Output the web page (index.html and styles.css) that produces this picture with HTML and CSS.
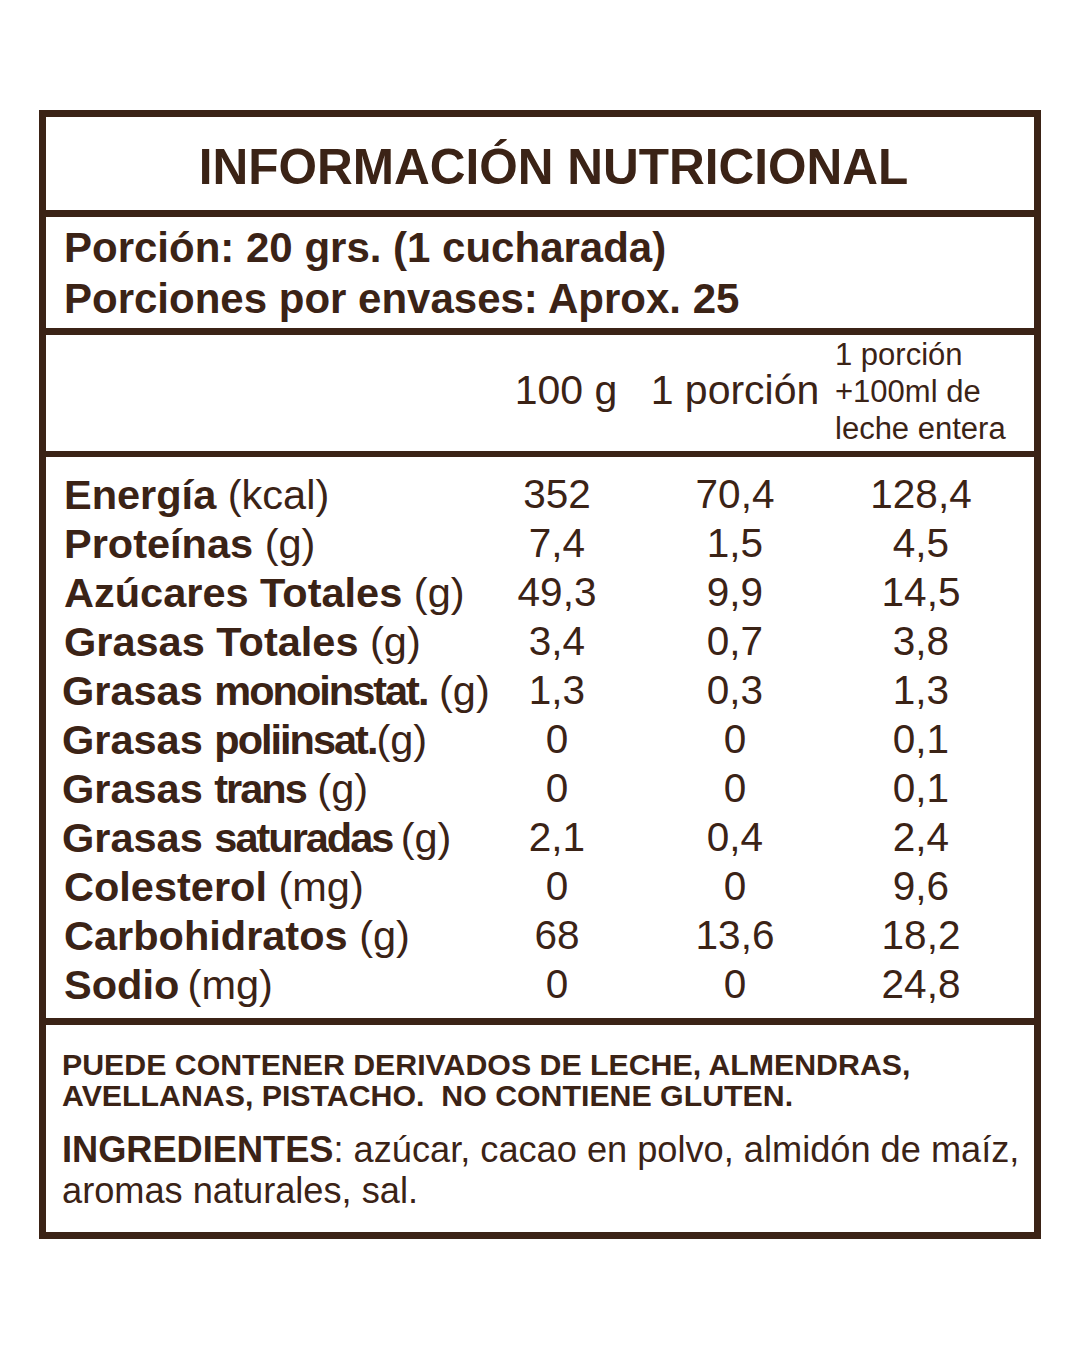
FILE: index.html
```html
<!DOCTYPE html>
<html lang="es">
<head>
<meta charset="utf-8">
<title>Información nutricional</title>
<link rel="stylesheet" href="styles.css">
</head>
<body>
<div class="label">
  <div class="title">INFORMACIÓN NUTRICIONAL</div>
  <div class="portion">
    <div>Porción: 20 grs. (1 cucharada)</div>
    <div>Porciones por envases: Aprox. 25</div>
  </div>
  <div class="head grid">
    <div></div>
    <div class="hc hc1">100 g</div>
    <div class="hc">1 porción</div>
    <div class="hc3">1 porción<br>+100ml de<br>leche entera</div>
  </div>
  <div class="rows grid">
    <div class="name"><b>Energía</b> (kcal)</div><div class="v">352</div><div class="v">70,4</div><div class="v">128,4</div>
    <div class="name"><b>Proteínas</b> (g)</div><div class="v">7,4</div><div class="v">1,5</div><div class="v">4,5</div>
    <div class="name"><b>Azúcares Totales</b> (g)</div><div class="v">49,3</div><div class="v">9,9</div><div class="v">14,5</div>
    <div class="name"><b>Grasas Totales</b> (g)</div><div class="v">3,4</div><div class="v">0,7</div><div class="v">3,8</div>
    <div class="name n2"><b>Grasas <span class="tight">monoinstat.</span></b> (g)</div><div class="v">1,3</div><div class="v">0,3</div><div class="v">1,3</div>
    <div class="name n2"><b>Grasas <span class="tight">poliinsat.</span></b>(g)</div><div class="v">0</div><div class="v">0</div><div class="v">0,1</div>
    <div class="name n2"><b>Grasas <span class="tight">trans</span></b> (g)</div><div class="v">0</div><div class="v">0</div><div class="v">0,1</div>
    <div class="name n2"><b>Grasas <span class="tight">saturadas</span></b>&#8201;(g)</div><div class="v">2,1</div><div class="v">0,4</div><div class="v">2,4</div>
    <div class="name"><b>Colesterol</b> (mg)</div><div class="v">0</div><div class="v">0</div><div class="v">9,6</div>
    <div class="name"><b>Carbohidratos</b> (g)</div><div class="v">68</div><div class="v">13,6</div><div class="v">18,2</div>
    <div class="name"><b>Sodio</b>&#8201;(mg)</div><div class="v">0</div><div class="v">0</div><div class="v">24,8</div>
  </div>
  <div class="foot">
    <p class="allergen">PUEDE CONTENER DERIVADOS DE LECHE, ALMENDRAS,<br>AVELLANAS, PISTACHO.&nbsp; NO CONTIENE GLUTEN.</p>
    <p class="ingr"><b>INGREDIENTES</b>: azúcar, cacao en polvo, almidón de maíz,<br>aromas naturales, sal.</p>
  </div>
</div>
</body>
</html>
```
FILE: styles.css
```css
html, body {
  margin: 0;
  padding: 0;
  background: #ffffff;
}
body {
  font-family: "Liberation Sans", Arial, sans-serif;
  color: #3b2316;
  width: 1080px;
  height: 1350px;
}
.label {
  margin: 110px 0 0 39px;
  width: 1002px;
  box-sizing: border-box;
  border: 7px solid #3b2316;
  height: 1129px;
  display: flex;
  flex-direction: column;
}
.title {
  font-weight: bold;
  font-size: 49.5px;
  line-height: 48px;
  text-align: center;
  padding: 26px 0 19px 27px;
  border-bottom: 7px solid #3b2316;
  white-space: nowrap;
}
.portion {
  font-weight: bold;
  font-size: 42px;
  line-height: 51px;
  padding: 5px 0 4px 18px;
  border-bottom: 7px solid #3b2316;
  white-space: nowrap;
}
.grid {
  display: grid;
  grid-template-columns: 436px 150px 206px 166px;
}
.head {
  height: 122px;
  box-sizing: border-box;
  padding-top: 1px;
  border-bottom: 6px solid #3b2316;
}
.hc {
  font-size: 41px;
  line-height: 49px;
  text-align: center;
  align-self: center;
  padding-bottom: 6px;
  white-space: nowrap;
}
.hc1 {
  padding-left: 18px;
}
.hc3 {
  font-size: 31px;
  line-height: 37px;
  margin-left: -3px;
  white-space: nowrap;
}
.rows {
  padding: 13px 0 9px;
  border-bottom: 7px solid #3b2316;
  font-size: 40.5px;
  line-height: 49px;
}
.name {
  padding-left: 18px;
  white-space: nowrap;
  font-size: 41.5px;
}
.n2 {
  padding-left: 16px;
}
.tight {
  letter-spacing: -2px;
}
.v {
  text-align: center;
  white-space: nowrap;
}
.foot {
  flex: 1;
  padding: 24px 0 0 16px;
}
.foot p {
  margin: 0;
  white-space: nowrap;
}
.allergen {
  font-weight: bold;
  font-size: 30.3px;
  line-height: 31px;
}
.ingr {
  margin-top: 18px !important;
  font-size: 36.2px;
  line-height: 41px;
}
```
